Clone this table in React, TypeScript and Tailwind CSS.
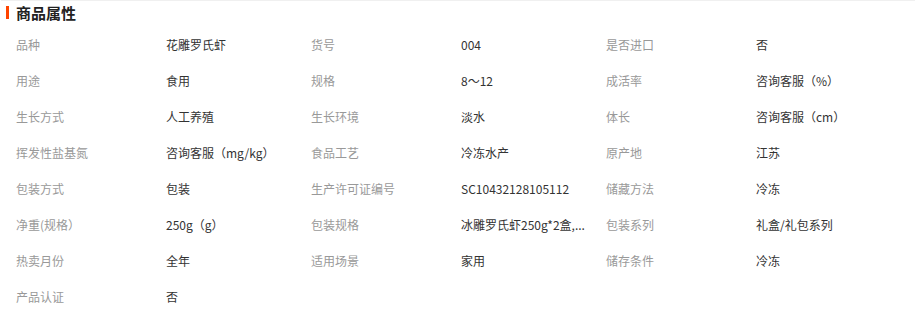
const rows: [string, string][][] = [
  [['品种', '花雕罗氏虾'], ['货号', '004'], ['是否进口', '否']],
  [['用途', '食用'], ['规格', '8～12'], ['成活率', '咨询客服（%）']],
  [['生长方式', '人工养殖'], ['生长环境', '淡水'], ['体长', '咨询客服（cm）']],
  [['挥发性盐基氮', '咨询客服（mg/kg）'], ['食品工艺', '冷冻水产'], ['原产地', '江苏']],
  [['包装方式', '包装'], ['生产许可证编号', 'SC10432128105112'], ['储藏方法', '冷冻']],
  [['净重(规格）', '250g（g）'], ['包装规格', '冰雕罗氏虾250g*2盒,...'], ['包装系列', '礼盒/礼包系列']],
  [['热卖月份', '全年'], ['适用场景', '家用'], ['储存条件', '冷冻']],
  [['产品认证', '否']],
];

export default function App() {
  return (
    <div className="w-[916px] h-[319px] bg-white overflow-hidden font-['Noto_Sans_CJK_SC',sans-serif]">
      <div className="mx-[1px] h-[1px] bg-[#f0f0f0]" />
      <div className="flex items-center h-[23px] pl-[6px]">
        <span className="w-[3px] h-[13px] bg-[#ff4400]" />
        <h2 className="ml-[7px] text-[15px] leading-none font-bold text-[#222]">商品属性</h2>
      </div>
      <div className="pl-[16px] pt-[3px]">
        {rows.map((row, i) => (
          <div key={i} className="grid grid-cols-[150px_145px_150px_145px_150px_1fr] h-[36px] items-center text-[12px]">
            {row.map(([k, v]) => [
              <span key={k} className="text-[#999] whitespace-nowrap">{k}</span>,
              <span key={k + 'v'} className="text-[#333] whitespace-nowrap">{v}</span>,
            ])}
          </div>
        ))}
      </div>
    </div>
  );
}
